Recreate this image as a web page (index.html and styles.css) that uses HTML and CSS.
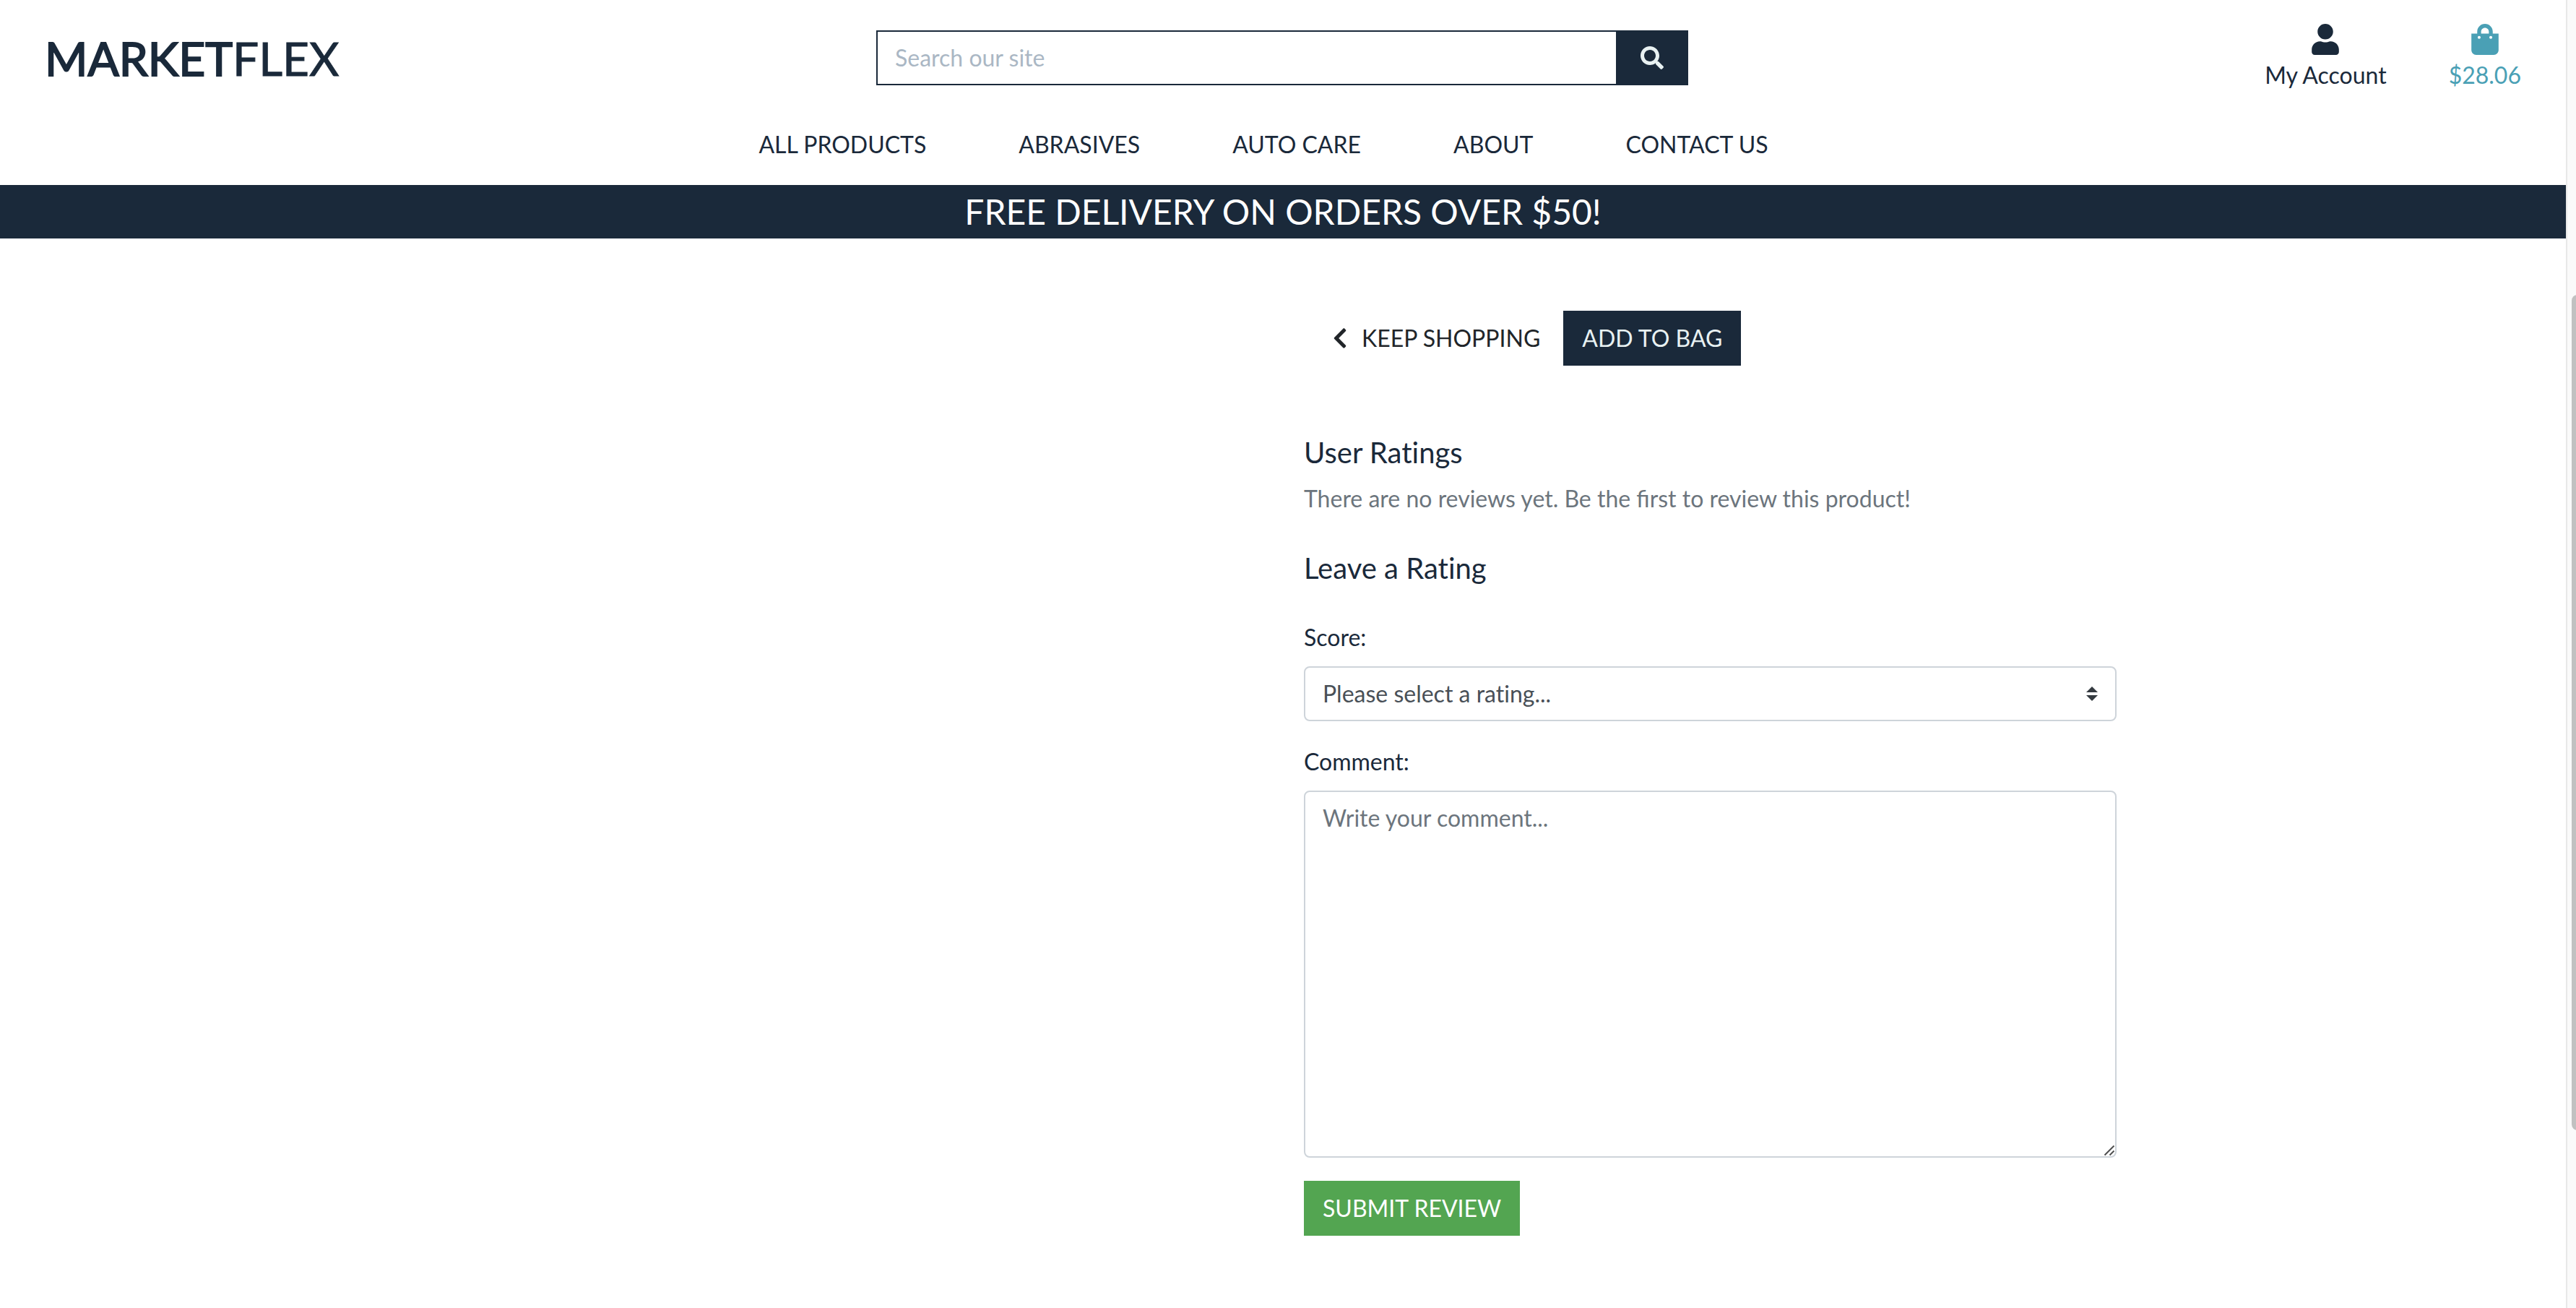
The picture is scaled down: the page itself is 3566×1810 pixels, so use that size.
FILE: index.html
```html
<!DOCTYPE html>
<html lang="en">
<head>
  <meta charset="utf-8">
  <meta name="viewport" content="width=device-width, initial-scale=1">
  <title>MarketFlex</title>
  <link rel="stylesheet" href="styles.css">
</head>
<body>
  <div class="page">
    <header class="header">
      <div class="header-row">
        <a class="logo" href="#"><span class="logo-strong">MARKET</span>FLEX</a>
        <form class="search" role="search">
          <input class="search-input" type="text" aria-label="Search our site" placeholder="Search our site">
          <button class="search-button" type="button" aria-label="Search">
            <svg class="icon" viewBox="0 0 512 512" aria-hidden="true"><path d="M505 442.7L405.3 343c-4.5-4.5-10.6-7-17-7H372c27.6-35.3 44-79.7 44-128C416 93.1 322.9 0 208 0S0 93.1 0 208s93.1 208 208 208c48.3 0 92.7-16.4 128-44v16.3c0 6.4 2.5 12.5 7 17l99.7 99.7c9.4 9.4 24.6 9.4 33.9 0l28.3-28.3c9.4-9.4 9.4-24.6.1-34zM208 336c-70.7 0-128-57.2-128-128 0-70.7 57.2-128 128-128 70.7 0 128 57.2 128 128 0 70.7-57.2 128-128 128z"/></svg>
          </button>
        </form>
        <div class="user-links">
          <a class="user-link" href="#">
            <svg class="icon-large" viewBox="0 0 448 512" aria-hidden="true"><path d="M224 256c70.7 0 128-57.3 128-128S294.7 0 224 0 96 57.3 96 128s57.3 128 128 128zm89.6 32h-16.7c-22.2 10.2-46.9 16-72.9 16s-50.6-5.8-72.9-16h-16.7C60.2 288 0 348.2 0 422.4V464c0 26.5 21.5 48 48 48h352c26.5 0 48-21.5 48-48v-41.6c0-74.2-60.2-134.4-134.4-134.4z"/></svg>
            <span>My Account</span>
          </a>
          <a class="user-link bag" href="#">
            <svg class="icon-large" viewBox="0 0 448 512" aria-hidden="true"><path d="M352 160v-32C352 57.42 294.579 0 224 0 153.42 0 96 57.42 96 128v32H0v272c0 44.183 35.817 80 80 80h288c44.183 0 80-35.817 80-80V160h-96zm-192-32c0-35.29 28.71-64 64-64s64 28.71 64 64v32H160v-32zm160 120c-13.255 0-24-10.745-24-24s10.745-24 24-24 24 10.745 24 24-10.745 24-24 24zm-192 0c-13.255 0-24-10.745-24-24s10.745-24 24-24 24 10.745 24 24-10.745 24-24 24z"/></svg>
            <span>$28.06</span>
          </a>
        </div>
      </div>
      <nav class="nav">
        <a href="#">ALL PRODUCTS</a>
        <a href="#">ABRASIVES</a>
        <a href="#">AUTO CARE</a>
        <a href="#">ABOUT</a>
        <a href="#">CONTACT US</a>
      </nav>
      <p class="banner">FREE DELIVERY ON ORDERS OVER $50!</p>
    </header>

    <main class="main">
      <section class="product">
        <div class="actions">
          <a class="button button-plain" href="#">
            <svg class="chevron" viewBox="0 0 320 512" aria-hidden="true"><path d="M34.52 239.03L228.87 44.69c9.37-9.37 24.57-9.37 33.94 0l22.67 22.67c9.36 9.36 9.37 24.52.04 33.9L131.49 256l154.02 154.75c9.34 9.38 9.32 24.54-.04 33.9l-22.67 22.67c-9.37 9.37-24.57 9.37-33.94 0L34.52 272.97c-9.37-9.37-9.37-24.57 0-33.94z"/></svg>
            KEEP SHOPPING
          </a>
          <button class="button button-dark" type="button">ADD TO BAG</button>
        </div>
        <h2 class="heading">User Ratings</h2>
        <p class="muted">There are no reviews yet. Be the first to review this product!</p>
        <form class="review">
          <h2 class="heading">Leave a Rating</h2>
          <div class="field">
            <label for="score">Score:</label>
            <select class="control select" id="score">
              <option>Please select a rating...</option>
              <option>1</option>
              <option>2</option>
              <option>3</option>
              <option>4</option>
              <option>5</option>
            </select>
          </div>
          <div class="field">
            <label for="comment">Comment:</label>
            <textarea class="control comment" id="comment" rows="10" placeholder="Write your comment..."></textarea>
          </div>
          <button class="button button-green" type="button">SUBMIT REVIEW</button>
        </form>
      </section>
    </main>
  </div>
  <div class="scroll-track" aria-hidden="true"><div class="scroll-thumb"></div></div>
</body>
</html>
```

FILE: styles.css
```css
* {
  box-sizing: border-box;
}

body {
  margin: 0;
  min-height: 100vh;
  display: flex;
  background: #fff;
  color: #1a293a;
  font: 32px/48px Lato, "Open Sans", sans-serif;
}

h2,
p {
  margin: 0;
}

a {
  color: inherit;
  text-decoration: none;
}

input,
select,
textarea,
button {
  margin: 0;
  font: inherit;
  color: inherit;
}

svg {
  display: block;
  fill: currentColor;
}

.page {
  flex: 1;
  min-width: 0;
}

/* Header */

.header-row {
  display: grid;
  grid-template-columns: repeat(3, 1fr);
  align-items: start;
  height: 128px;
}

.logo {
  padding: 43px 0 0 62px;
  font-size: 64px;
  line-height: 76px;
  -webkit-text-stroke: 1px currentColor;
}

.logo-strong {
  -webkit-text-stroke: 2px currentColor;
}

.search {
  display: flex;
  height: 76px;
  margin: 42px 31px 0 29px;
}

.search-input {
  flex: 1;
  min-width: 0;
  padding: 0 24px;
  border: 2px solid #1a293a;
  border-right: 0;
  border-radius: 0;
  background: #fff;
  outline: 0;
}

.search-input::placeholder {
  color: #aab7c4;
  opacity: 1;
}

.search-button {
  display: grid;
  place-items: center;
  width: 100px;
  padding: 0;
  border: 0;
  background: #1a293a;
  color: #e8f1f2;
}

.icon {
  width: 32px;
  height: 32px;
}

.icon-large {
  height: 43px;
  width: 38px;
}

.user-links {
  display: flex;
  justify-content: flex-end;
  gap: 86px;
  padding: 33px 62px 0 0;
}

.user-link {
  display: flex;
  flex-direction: column;
  align-items: center;
  gap: 4px;
}

.bag {
  color: #4aa0b5;
}

.nav {
  display: flex;
  justify-content: center;
  gap: 128px;
  padding: 48px 54px 32px 0;
}

.banner {
  padding: 8px;
  background: #1a293a;
  color: #fff;
  font-size: 48px;
  line-height: 58px;
  text-align: center;
}

/* Product */

.main {
  display: grid;
  grid-template-columns: 3fr 2fr 1fr;
  padding: 100px 0;
}

.product {
  grid-column: 2;
  padding: 0 30px 0 29px;
}

.actions {
  display: flex;
  gap: 6px;
  padding-left: 14px;
  margin-bottom: 96px;
}

.button {
  display: inline-flex;
  align-items: center;
  padding: 12px 24px;
  border: 2px solid transparent;
  border-radius: 0;
  white-space: nowrap;
}

.button-plain {
  gap: 20px;
  color: #212529;
}

.button-dark {
  border-color: #1a293a;
  background: #1a293a;
  color: #e8f1f2;
}

.button-green {
  border-color: #53a551;
  background: #53a551;
  color: #fff;
}

.chevron {
  width: 20px;
  height: 32px;
}

.heading {
  font-size: 40px;
  font-weight: 400;
  line-height: 48px;
  font-variant-ligatures: none;
}

.muted {
  margin: 16px 0 48px;
  color: #6c757d;
}

.field {
  display: flex;
  flex-direction: column;
  gap: 16px;
  margin-bottom: 32px;
}

.heading + .field {
  margin-top: 48px;
}

.control {
  display: block;
  width: 100%;
  padding: 12px 24px;
  border: 2px solid #ced4da;
  border-radius: 8px;
  background-color: #fff;
  color: #495057;
  font-variant-ligatures: none;
}

.select {
  appearance: none;
  background-image: url("data:image/svg+xml,%3Csvg xmlns='http://www.w3.org/2000/svg' viewBox='0 0 4 5'%3E%3Cpath fill='%23343a40' d='M2 0L0 2h4zm0 5L0 3h4z'/%3E%3C/svg%3E");
  background-repeat: no-repeat;
  background-position: right 24px center;
  background-size: 16px 20px;
}

.comment {
  resize: vertical;
}

.comment::placeholder {
  color: #6c757d;
  opacity: 1;
}

.comment::-webkit-scrollbar {
  width: 16px;
  height: 16px;
}

.comment::-webkit-resizer {
  background: url("data:image/svg+xml,%3Csvg xmlns='http://www.w3.org/2000/svg' viewBox='0 0 16 16'%3E%3Cpath stroke='%23505050' stroke-width='2' d='M1 14L14 1M8 14L14 8'/%3E%3C/svg%3E") no-repeat center / 16px 16px;
}

/* Scroll bar */

.scroll-track {
  flex: none;
  width: 14px;
  overflow: hidden;
  border-left: 2px solid #e8e8e8;
  background: #fafafa;
}

.scroll-thumb {
  width: 16px;
  height: 1156px;
  margin: 408px 0 0 6px;
  border-radius: 8px;
  background: #c1c1c1;
}
```
